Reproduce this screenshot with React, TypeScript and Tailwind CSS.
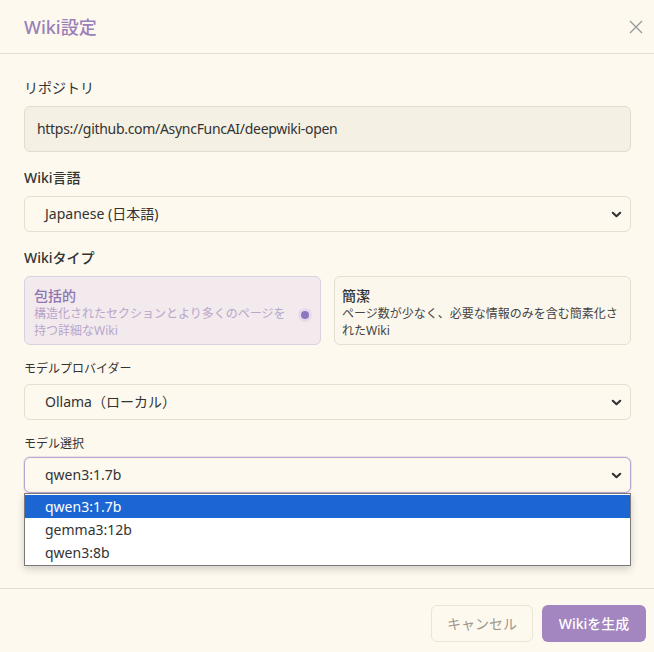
import React from "react";

const font = { fontFamily: '"Noto Sans", "Noto Sans CJK JP", sans-serif' };

function Chevron() {
  return (
    <svg width="11" height="7" viewBox="0 0 11 7" className="shrink-0">
      <path d="M1.8 1.8 L5.5 5.2 L9.2 1.8" fill="none" stroke="#333" strokeWidth="2.2" strokeLinecap="round" strokeLinejoin="round" />
    </svg>
  );
}

function Select({ value, focused }: { value: string; focused?: boolean }) {
  return (
    <div
      className={
        "h-[36px] rounded-md border flex items-center justify-between pl-5 pr-[3px] text-sm text-[#333] bg-[#fdf9ee] " +
        (focused ? "border-[#b8a4cc] shadow-[0_0_0_1px_rgba(184,164,204,0.25)]" : "border-[#e5dfd0]")
      }
    >
      <span>{value}</span>
      <span className="pr-[5px]">
        <Chevron />
      </span>
    </div>
  );
}

export default function App() {
  return (
    <div style={font} className="w-[654px] h-[652px] bg-[#fdf9ee] flex flex-col text-[#333]">
      <div className="h-[54px] border-b border-[#e3ded2] flex items-center justify-between pl-6 pr-[11px] shrink-0">
        <div className="text-lg text-[#9a80b9] font-medium">Wiki設定</div>
        <svg width="14" height="14" viewBox="0 0 14 14">
          <path d="M1 1 L13 13 M13 1 L1 13" stroke="#9a9a9a" strokeWidth="1.4" />
        </svg>
      </div>

      <div className="flex-1 pl-6 pr-[23px] pt-6 flex flex-col">
        <div className="flex flex-col">
          <div className="text-sm leading-5 mb-2 text-[#333]">リポジトリ</div>
          <div className="h-[46px] rounded-md border border-[#e2dccc] bg-[#f5f0e4] flex items-center px-3 text-sm text-[#333] tracking-[-0.3px]">
            https://github.com/AsyncFuncAI/deepwiki-open
          </div>
        </div>

        <div className="flex flex-col mt-4">
          <div className="text-sm leading-5 mb-2 font-medium text-[#333]">Wiki言語</div>
          <Select value="Japanese (日本語)" />
        </div>

        <div className="flex flex-col mt-4">
          <div className="text-sm leading-5 mb-2 font-medium text-[#333]">Wikiタイプ</div>
          <div className="grid grid-cols-2 gap-[13px]">
            <div className="h-[69px] rounded-md border border-[#dcd0e0] bg-[#f2eaec] pl-[9px] pr-[8px] pt-[10px] flex items-start justify-between gap-1">
              <div className="flex-1">
                <div className="text-sm leading-[18px] font-medium text-[#8f74b1]">包括的</div>
                <div className="text-xs leading-[17px] text-[#b8a6cb] whitespace-nowrap">
                  構造化されたセクションとより多くのページを
                  <br />
                  持つ詳細なWiki
                </div>
              </div>
              <div className="mt-[21px] w-[14px] h-[14px] shrink-0 rounded-full bg-[#e5dbea] flex items-center justify-center">
                <div className="w-[8px] h-[8px] rounded-full bg-[#8c76c0]" />
              </div>
            </div>
            <div className="h-[69px] rounded-md border border-[#e5dfd0] bg-[#fbf7ec] pl-[7px] pr-0 pt-[10px]">
              <div className="text-sm leading-[18px] font-medium text-[#333]">簡潔</div>
              <div className="text-xs leading-[17px] text-[#444] whitespace-nowrap">
                ページ数が少なく、必要な情報のみを含む簡素化さ
                <br />
                れたWiki
              </div>
            </div>
          </div>
        </div>

        <div className="flex flex-col mt-4">
          <div className="text-xs leading-4 mb-[7px] text-[#333]">モデルプロバイダー</div>
          <Select value="Ollama（ローカル）" />
        </div>

        <div className="flex flex-col mt-4 relative">
          <div className="text-xs leading-4 mb-[5px] text-[#333]">モデル選択</div>
          <Select value="qwen3:1.7b" focused />
          <div className="absolute left-0 right-0 top-[57px] bg-white border border-[#7a7a7a] shadow-[0_3px_8px_rgba(0,0,0,0.18)] py-px text-sm text-[#333] z-10">
            <div className="h-[23px] bg-[#1b66d2] text-white flex items-center pl-5">qwen3:1.7b</div>
            <div className="h-[23px] flex items-center pl-5">gemma3:12b</div>
            <div className="h-[23px] flex items-center pl-5">qwen3:8b</div>
          </div>
        </div>
      </div>

      <div className="h-[64px] border-t border-[#e3ded2] flex items-start justify-end gap-[9px] pt-4 pr-2 shrink-0">
        <button className="w-[102px] h-[37px] rounded-md border border-[#ebe5d8] text-sm text-[#9e978c] bg-[#fdf9ee]">キャンセル</button>
        <button className="w-[104px] h-[37px] rounded-md bg-[#a385c0] text-sm text-white font-medium">Wikiを生成</button>
      </div>
    </div>
  );
}
